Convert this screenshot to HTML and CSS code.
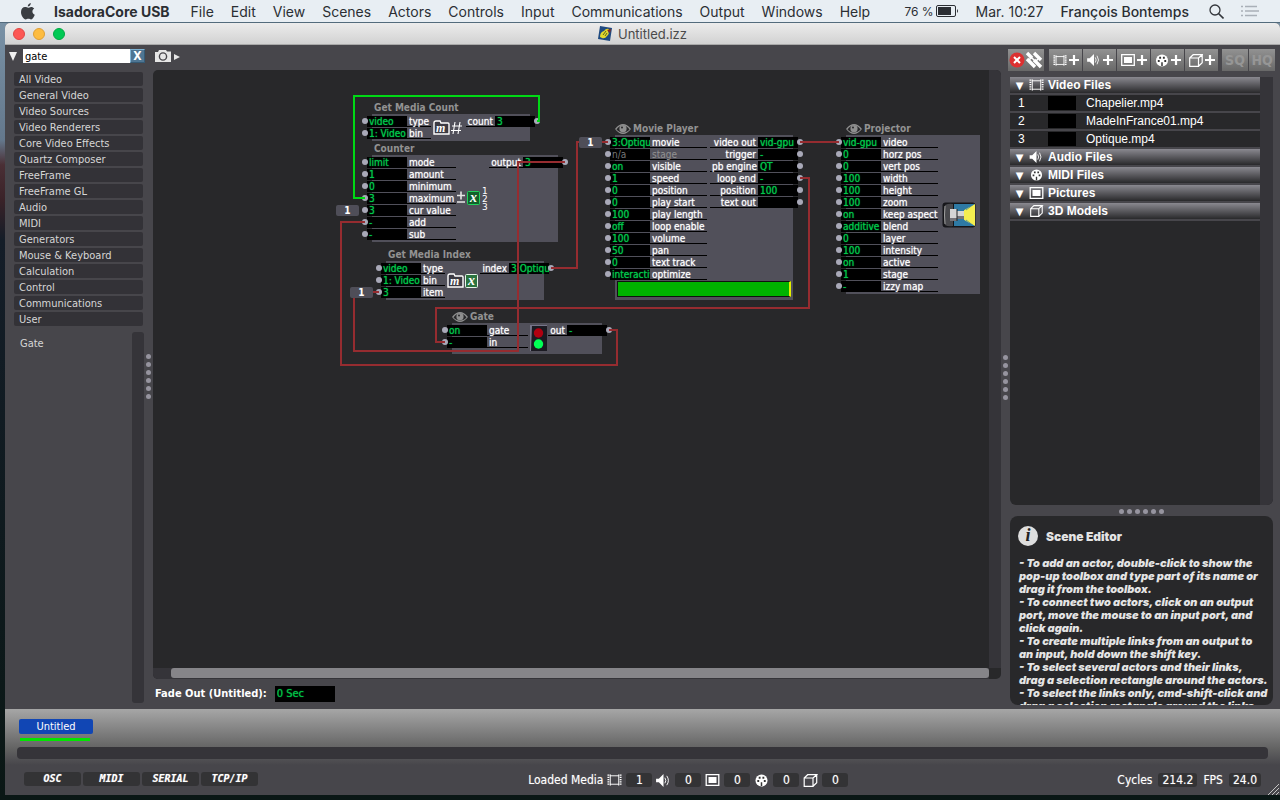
FILE: index.html
```html
<!DOCTYPE html>
<html lang="en">
<head>
<meta charset="utf-8">
<title>Untitled.izz</title>
<link rel="stylesheet" href="styles.css">
</head>
<body>
<svg class="defs" aria-hidden="true">
  <symbol id="film" viewBox="0 0 16 12"><path d="M1.500 0v12M14.500 0v12" stroke="#fff" stroke-width="2" stroke-dasharray="1.400 1"/><path d="M3.500 0v12M12.500 0v12M3 1.500h10M3 10.500h10" stroke="#fff" stroke-width="1" fill="none"/></symbol>
  <symbol id="sound" viewBox="0 0 16 14"><path d="M0 5h3l5-5v14L3 9H0z" fill="#fff"/><path d="M9.500 4q2 3 0 6M11.500 2q3.500 5 0 10" stroke="#fff" fill="none"/></symbol>
  <symbol id="picture" viewBox="0 0 14 12"><path d="M.7.7h12.600v10.600H.7z" stroke="#fff" stroke-width="1.300" fill="none"/><path d="M3 3h8v6H3z" fill="#fff"/></symbol>
  <symbol id="midi" viewBox="0 0 14 14"><circle cx="7" cy="7" r="6.500" fill="#fff"/><path d="M2.500 6.500h2v2h-2zM9.500 6.500h2v2h-2zM4 3h2v2H4zM8 3h2v2H8zM6.200 9h1.600v4H6.200z" fill="#333"/></symbol>
  <symbol id="cube" viewBox="0 0 14 13"><path d="M.7 4h8.800v8.300H.7zM.7 4l3.500-3.300h9L9.500 4M13.200.7v8l-3.700 3.600" stroke="#fff" stroke-width="1.200" fill="none"/></symbol>
  <symbol id="eye" viewBox="0 0 16 10"><path d="M0 5Q4 0 8 0t8 5q-4 5-8 5T0 5z" fill="#8f8f8f"/><path d="M1.500 5.500Q4 1.500 8 1.500t6.500 4Q12 8.500 8 8.500t-6.500-3z" fill="#28282a"/><circle cx="8" cy="4.700" r="3.600" fill="#8f8f8f"/><circle cx="7" cy="3.500" r="1" fill="#28282a"/></symbol>
  <symbol id="plus" viewBox="0 0 10 10"><path d="M5 0v10M0 5h10" stroke="#fff" stroke-width="2.200"/></symbol>
</svg>

<nav class="menubar">
  <svg class="apple" viewBox="0 0 14 17"><path d="M9.800 0c.1 1.800-1.300 3.500-3 3.500C6.600 1.800 8.200.2 9.800 0zM7.200 4.700c.8 0 1.500-.8 3-.8 1.100 0 2.300.6 3 1.700-2.700 1.600-2.200 5.200.6 6.200-.7 2-2.200 4.600-3.700 4.600-1 0-1.400-.7-2.700-.7s-1.700.7-2.700.7C2.700 16.400 0 12.700 0 9c0-3.200 2-5 4-5 1.400 0 2.400.7 3.200.7z" fill="#3a3d42"/></svg>
  <button class="menu app">IsadoraCore USB</button>
  <button class="menu">File</button><button class="menu">Edit</button><button class="menu">View</button><button class="menu">Scenes</button><button class="menu">Actors</button><button class="menu">Controls</button><button class="menu">Input</button><button class="menu">Communications</button><button class="menu">Output</button><button class="menu">Windows</button><button class="menu">Help</button>
  <span class="battery">76 % <svg width="23" height="12" viewBox="0 0 23 12"><rect x=".5" y=".5" width="19" height="11" rx="1.500" fill="none" stroke="#2b2e33"/><path d="M2 2h13v8H2z" fill="#2b2e33"/><path d="M21 4q2 2 0 4z" fill="#2b2e33"/></svg></span>
  <span class="clock">Mar. 10:27</span>
  <button class="menu user">François Bontemps</button>
  <button class="menu find" aria-label="Search"><svg width="15" height="15" viewBox="0 0 15 15"><circle cx="6" cy="6" r="5" fill="none" stroke="#33363b" stroke-width="1.300"/><path d="M9.500 9.500l5 5" stroke="#33363b" stroke-width="1.600"/></svg></button>
  <button class="menu" aria-label="Notifications"><svg width="18" height="12" viewBox="0 0 18 12"><path d="M0 1.500h2M0 6h2M0 10.500h2M4 1.500h12M4 6h14M4 10.500h12" stroke="#a9b0b8" stroke-width="1.500"/></svg></button>
</nav>

<main class="window">
  <header class="titlebar">
    <div class="lights"><button class="light close" aria-label="Close"></button><button class="light mini" aria-label="Minimise"></button><button class="light full" aria-label="Zoom"></button></div>
    <h1 class="doc"><svg width="14" height="15" viewBox="0 0 14 15"><path d="M2 0l12 2-2 13-12-2z" fill="#1f4a80"/><path d="M2 11q0-5 4-6 2-3 5-2l-1 3q2 1-1 4-2 3-5 2z" fill="#e2d82c"/><path d="M5 9l3-4M7 10l2-3" stroke="#5c6420"/><path d="M9 4l4-1-1 4z" fill="#8c2a1c"/></svg>Untitled.izz</h1>
  </header>

  <div class="workspace">
    <aside class="toolbox">
      <div class="search"><svg width="8" height="9" viewBox="0 0 8 9"><path d="M0 0h8L4 9z" fill="#f0f0f0"/></svg><input class="query" type="text" value="gate" aria-label="Search actors"><button class="clear" aria-label="Clear search">X</button></div>
      <div class="categories">
        <button>All Video</button><button>General Video</button><button>Video Sources</button><button>Video Renderers</button><button>Core Video Effects</button><button>Quartz Composer</button><button>FreeFrame</button><button>FreeFrame GL</button><button>Audio</button><button>MIDI</button><button>Generators</button><button>Mouse &amp; Keyboard</button><button>Calculation</button><button>Control</button><button>Communications</button><button>User</button>
      </div>
      <div class="found"><button class="actor">Gate</button><div class="track"></div></div>
      <div class="grip left-grip"><i></i><i></i><i></i><i></i><i></i><i></i></div>
    </aside>

    <section class="editor">
      <div class="snapshot"><svg width="26" height="12" viewBox="0 0 26 12"><path d="M0 2h3l1-2h7l1 1.500h4V12H0z" fill="#e6e6e6"/><circle cx="8" cy="6.500" r="3.600" fill="none" stroke="#47464b" stroke-width="1.400"/><path d="M19 4l6 3-6 3z" fill="#e6e6e6"/></svg></div>
      <div class="stage">
        <div class="canvas">
          <article class="node media-count">
            <h2>Get Media Count</h2>
            <div class="body">
              <ul class="in short"><li><i></i><b>video</b><span>type</span></li><li><i></i><b>1: Video</b><span>bin</span></li></ul>
              <svg class="glyph" width="30" height="16" viewBox="0 0 30 16"><path d="M1 14V3q0-2 2-2h4l1 2h7q1 0 1 1v10z" fill="#3c3b44" stroke="#fff" stroke-width="1.400"/><text x="3" y="12" class="serif">m</text><path d="M22 2l-2 12M27 2l-2 12M19 6h10M18 10.500h10" stroke="#fff" stroke-width="1.100"/></svg>
              <ul class="out"><li><span>count</span><b>3</b><i></i></li></ul>
            </div>
          </article>
          <article class="node counter">
            <h2>Counter</h2>
            <div class="body">
              <ul class="in mid"><li><i></i><b>limit</b><span>mode</span></li><li><i></i><b>1</b><span>amount</span></li><li><i></i><b>0</b><span>minimum</span></li><li><i></i><b>3</b><span>maximum</span></li><li><i></i><b>3</b><span>cur value</span></li><li><i></i><b>-</b><span>add</span></li><li><i></i><b>-</b><span>sub</span></li></ul>
              <svg class="glyph flush" width="32" height="26" viewBox="0 0 32 26"><path d="M1 9.500h8M5 5.500v8M1 16h8" stroke="#e6e6e6" stroke-width="1.600"/><rect x="11.500" y="5.500" width="12" height="13" rx="1" fill="#12602b" stroke="#21d35b"/><text x="14" y="16" class="serif big">x</text><text x="26" y="8" class="tiny">1</text><text x="26" y="16" class="tiny">2</text><text x="26" y="24" class="tiny">3</text></svg>
              <ul class="out"><li><span>output</span><b>3</b><i></i></li></ul>
            </div>
          </article>
          <article class="node media-index">
            <h2>Get Media Index</h2>
            <div class="body">
              <ul class="in short"><li><i></i><b>video</b><span>type</span></li><li><i></i><b>1: Video</b><span>bin</span></li><li><i></i><b>3</b><span>item</span></li></ul>
              <svg class="glyph" width="32" height="16" viewBox="0 0 32 16"><path d="M1 14V3q0-2 2-2h4l1 2h7q1 0 1 1v10z" fill="#3c3b44" stroke="#fff" stroke-width="1.400"/><text x="3" y="12" class="serif">m</text><rect x="18.500" y="1.500" width="12" height="13" rx="1" fill="#2c7440" stroke="#e6f5e9"/><text x="21" y="12" class="serif big">x</text></svg>
              <ul class="out"><li><span>index</span><b>3:Optique</b><i></i></li></ul>
            </div>
          </article>
          <article class="node gate">
            <h2><svg width="16" height="10"><use href="#eye"/></svg>Gate</h2>
            <div class="body">
              <ul class="in narrow"><li><i></i><b>on</b><span>gate</span></li><li><i></i><b>-</b><span>in</span></li></ul>
              <svg class="glyph" width="17" height="26" viewBox="0 0 17 26"><path d="M0 0h17v26H0z" fill="#77758a"/><path d="M2 1h15v25H1z" fill="#1b1a22"/><circle cx="8.500" cy="8" r="4.700" fill="#b00010"/><circle cx="8.500" cy="19" r="4.700" fill="#00ff55"/></svg>
              <ul class="out"><li><span>out</span><b>-</b><i></i></li></ul>
            </div>
          </article>
          <article class="node movie">
            <h2><svg width="16" height="10"><use href="#eye"/></svg>Movie Player</h2>
            <div class="body">
              <ul class="in wide"><li><i></i><b>3:Optique</b><span>movie</span></li><li class="off"><i></i><b>n/a</b><span>stage</span></li><li><i></i><b>on</b><span>visible</span></li><li><i></i><b>1</b><span>speed</span></li><li><i></i><b>0</b><span>position</span></li><li><i></i><b>0</b><span>play start</span></li><li><i></i><b>100</b><span>play length</span></li><li><i></i><b>off</b><span>loop enable</span></li><li><i></i><b>100</b><span>volume</span></li><li><i></i><b>50</b><span>pan</span></li><li><i></i><b>0</b><span>text track</span></li><li><i></i><b>interactive</b><span>optimize</span></li></ul>
              <ul class="out wide"><li><span>video out</span><b>vid-gpu</b><i></i></li><li><span>trigger</span><b>-</b><i></i></li><li><span>pb engine</span><b>QT</b><i></i></li><li><span>loop end</span><b>-</b><i></i></li><li><span>position</span><b>100</b><i></i></li><li><span>text out</span><b></b><i></i></li></ul>
              <div class="progress"></div>
            </div>
          </article>
          <article class="node projector">
            <h2><svg width="16" height="10"><use href="#eye"/></svg>Projector</h2>
            <div class="body">
              <ul class="in wide"><li><i></i><b>vid-gpu</b><span>video</span></li><li><i></i><b>0</b><span>horz pos</span></li><li><i></i><b>0</b><span>vert pos</span></li><li><i></i><b>100</b><span>width</span></li><li><i></i><b>100</b><span>height</span></li><li><i></i><b>100</b><span>zoom</span></li><li><i></i><b>on</b><span>keep aspect</span></li><li><i></i><b>additive</b><span>blend</span></li><li><i></i><b>0</b><span>layer</span></li><li><i></i><b>100</b><span>intensity</span></li><li><i></i><b>on</b><span>active</span></li><li><i></i><b>1</b><span>stage</span></li><li><i></i><b>-</b><span>izzy map</span></li></ul>
              <svg class="glyph lamp" width="35" height="26" viewBox="0 0 35 26"><rect x=".5" y=".5" width="33" height="25" rx="3" fill="#16161a"/><path d="M12 2h20v22H12z" fill="#2e7aa5"/><path d="M3 3q4-2 8-1v22q-5 1-8-1-2-10 0-20z" fill="#48484c"/><path d="M3 4q-1 9 0 18" stroke="#a0a0a0" fill="none"/><path d="M8 7h7v12H8zM15 9h7v8h-7z" fill="#d5d5d5"/><path d="M8 16h7v3H8zM15 14h7v3h-7z" fill="#74747a"/><path d="M15 7v12" stroke="#222"/><path d="M22 8L33 2v22l-11-6z" fill="#f4ee50"/><path d="M22 8l7-6M24 8l8-6M22 18l7 6M24 18l8 6" stroke="#2e7aa5" stroke-width=".7"/></svg>
            </div>
          </article>
          <svg class="wires" width="836" height="598"><g transform="translate(-153 -70)" fill="none" stroke-width="2">
            <path d="M537 121h2V96H354v102h11" stroke="#00d915"/>
            <path d="M565 162H518v189H354v-59h25M551 268h26V142h31M609 330h8v35H341V222h24M800 142h39M800 178h9v130H436v34h9" stroke="#962c30"/>
          </g></svg>
          <span class="pill p-value">1</span><span class="pill p-item">1</span><span class="pill p-movie">1</span>
        </div>
        <div class="vtrack"></div>
        <div class="htrack"><div class="thumb"></div></div>
      </div>
      <label class="fade">Fade Out (Untitled): <input type="text" value="0 Sec"></label>
    </section>

    <div class="grip right-grip"><i></i><i></i><i></i><i></i><i></i><i></i></div>

    <aside class="side">
      <div class="tools">
        <button class="tool links" aria-label="Hide links"><svg width="34" height="18" viewBox="0 0 34 18"><circle cx="8" cy="9" r="7.500" fill="#dc3030"/><path d="M5 6l6 6M11 6l-6 6" stroke="#fff" stroke-width="2"/><path d="M18 8l8 8M18 2l5 5M25 9l7 7M25 2l7 7" stroke="#fff" stroke-width="3.400"/><path d="M22 6l4 4M20 9l2-2M27 10l2-2" stroke="#fff" stroke-width="1.600"/></svg></button>
        <button class="tool" aria-label="Add video"><svg width="14" height="11"><use href="#film"/></svg><svg width="10" height="10"><use href="#plus"/></svg></button>
        <button class="tool" aria-label="Add audio"><svg width="14" height="12"><use href="#sound"/></svg><svg width="10" height="10"><use href="#plus"/></svg></button>
        <button class="tool" aria-label="Add picture"><svg width="14" height="12"><use href="#picture"/></svg><svg width="10" height="10"><use href="#plus"/></svg></button>
        <button class="tool" aria-label="Add MIDI"><svg width="14" height="13"><use href="#midi"/></svg><svg width="10" height="10"><use href="#plus"/></svg></button>
        <button class="tool" aria-label="Add 3D model"><svg width="14" height="13"><use href="#cube"/></svg><svg width="10" height="10"><use href="#plus"/></svg></button>
        <button class="tool quality first">SQ</button><button class="tool quality">HQ</button>
      </div>
      <div class="media">
        <div class="files">
          <button class="group"><em>▼</em><svg width="15" height="12"><use href="#film"/></svg>Video Files</button>
          <div class="file"><span>1</span><i></i>Chapelier.mp4</div>
          <div class="file"><span>2</span><i></i>MadeInFrance01.mp4</div>
          <div class="file"><span>3</span><i></i>Optique.mp4</div>
          <button class="group"><em>▼</em><svg width="15" height="12"><use href="#sound"/></svg>Audio Files</button>
          <button class="group"><em>▼</em><svg width="15" height="12"><use href="#midi"/></svg>MIDI Files</button>
          <button class="group"><em>▼</em><svg width="15" height="12"><use href="#picture"/></svg>Pictures</button>
          <button class="group"><em>▼</em><svg width="15" height="12"><use href="#cube"/></svg>3D Models</button>
        </div>
        <div class="vtrack"></div>
      </div>
      <div class="grip flat"><i></i><i></i><i></i><i></i><i></i><i></i></div>
      <div class="info">
        <h2><span class="badge">i</span>Scene Editor</h2>
        <p>- To add an actor, double-click to show the<br>pop-up toolbox and type part of its name or<br>drag it from the toolbox.</p>
        <p>- To connect two actors, click on an output<br>port, move the mouse to an input port, and<br>click again.</p>
        <p>- To create multiple links from an output to<br>an input, hold down the shift key.</p>
        <p>- To select several actors and their links,<br>drag a selection rectangle around the actors.</p>
        <p>- To select the links only, cmd-shift-click and<br>drag a selection rectangle around the links.</p>
      </div>
    </aside>
  </div>

  <div class="scenes">
    <button class="scene">Untitled</button>
    <div class="level"></div>
    <div class="scenetrack"></div>
  </div>
  <footer class="status">
    <div class="tags"><span>OSC</span><span>MIDI</span><span>SERIAL</span><span>TCP/IP</span></div>
    <div class="loaded">Loaded Media
      <svg width="15" height="12"><use href="#film"/></svg><output>1</output>
      <svg width="15" height="13"><use href="#sound"/></svg><output>0</output>
      <svg width="15" height="12"><use href="#picture"/></svg><output>0</output>
      <svg width="15" height="13"><use href="#midi"/></svg><output>0</output>
      <svg width="15" height="13"><use href="#cube"/></svg><output>0</output>
    </div>
    <div class="stats">Cycles <output>214.2</output> FPS <output>24.0</output></div>
    <svg class="resize" width="12" height="12" viewBox="0 0 12 12"><path d="M1 12L12 1M5 12l7-7M9 12l3-3" stroke="#c4c4c4"/></svg>
  </footer>
</main>
</body>
</html>
```
FILE: styles.css
```css
* { box-sizing: border-box; }
html, body { height: 100%; }
body {
  margin: 0;
  display: flex;
  flex-direction: column;
  background: linear-gradient(#7d96aa 0, #64788c 140px, #4a2f35 165px, #3a2228 200px, #141d28 240px, #0a1715 100%);
  font-family: "DejaVu Sans Condensed", "DejaVu Sans", sans-serif;
  font-size: 11px;
  color: #fff;
  overflow: hidden;
}
button { font: inherit; color: inherit; border: 0; padding: 0; background: none; }
ul { list-style: none; margin: 0; padding: 0; }
h1, h2, p { margin: 0; }
i, em { font-style: normal; }
.defs { position: absolute; width: 0; height: 0; }

.menubar {
  flex: none;
  height: 23px;
  display: flex;
  align-items: center;
  gap: 17px;
  padding: 0 21px;
  background: #e8eef3;
  border-bottom: 1px solid #536b7c;
  color: #2b2e33;
  font-family: Inter, sans-serif;
  font-size: 14px;
}
.menu { white-space: nowrap; display: flex; }
.menu.app { margin-right: 4px; font-weight: 700; }
.apple { width: 14px; height: 17px; margin-right: 2px; flex: none; }
.battery { margin-left: auto; font-size: 12px; display: flex; align-items: center; gap: 2px; white-space: nowrap; }
.clock { white-space: nowrap; }
.menu.user { font-weight: 500; }
.menu.find { margin-left: 3px; }

.window {
  flex: 1;
  min-height: 0;
  margin: 0 0 5px 5px;
  display: flex;
  flex-direction: column;
  background: #47464b;
  border-radius: 5px 5px 0 0;
  overflow: hidden;
}
.titlebar {
  flex: none;
  height: 22px;
  display: grid;
  grid-template-columns: 1fr auto 1fr;
  align-items: center;
  background: linear-gradient(#ececec, #d2d2d2);
  border-bottom: 1px solid #a9a9a9;
}
.lights { display: flex; gap: 8px; padding-left: 8px; }
.light { width: 12px; height: 12px; border-radius: 50%; }
.close { background: #fc5753; border: 1px solid #df4744; }
.mini { background: #fdbc40; border: 1px solid #de9f34; }
.full { background: #00c954; border: 1px solid #00a844; }
.doc {
  display: flex;
  gap: 6px;
  align-items: center;
  color: #4a4a4a;
  font: 400 13px Inter, sans-serif;
}

.workspace { flex: 1; min-height: 0; display: flex; }
.toolbox {
  flex: none;
  width: 148px;
  display: flex;
  flex-direction: column;
  padding: 4px 8px 6px 9px;
  position: relative;
}
.search { display: flex; align-items: center; height: 14px; margin: 0 0 9px -5px; }
.query {
  flex: 1;
  min-width: 0;
  height: 14px;
  margin-left: 6px;
  padding: 0 2px;
  border: 0;
  background: #fff;
  color: #000;
  font: inherit;
}
.clear { width: 15px; height: 14px; background: #4f7693; border: 1px solid; border-color: #7fb2d2 #355a74 #355a74 #7fb2d2; font-size: 12px; font-weight: 700; line-height: 12px; }
.categories { display: grid; gap: 2px; margin-right: 2px; }
.categories button {
  height: 14px;
  padding: 1px 0 0 5px;
  line-height: 13px;
  text-align: left;
  border-radius: 2px;
  background: #333237;
  color: #d6d6d6;
}
.found { flex: 1; display: flex; justify-content: space-between; align-items: flex-start; margin-top: 6px; }
.actor { padding: 5px 6px; color: #d6d6d6; }
.track { align-self: stretch; width: 12px; margin-right: 1px; border-radius: 3px; background: #353439; }
.grip { display: flex; flex-direction: column; gap: 3px; }
.grip i { width: 5px; height: 5px; border-radius: 50%; background: #96949f; }
.left-grip { position: absolute; right: 2px; top: 309px; }
.right-grip { flex: none; width: 9px; padding: 310px 2px 0; }
.grip.flat { flex: none; flex-direction: row; justify-content: center; padding: 4px 0 2px; }

.editor { flex: 1; min-width: 0; display: flex; flex-direction: column; }
.snapshot { height: 25px; padding: 5px 2px; }
.stage {
  flex: 1;
  min-height: 0;
  display: grid;
  grid-template: 1fr 11px / 1fr 12px;
  border-radius: 5px;
  overflow: hidden;
  background: #28282a;
}
.canvas { position: relative; overflow: hidden; }
.vtrack { background: #353439; }
.htrack { background: #353439; padding-left: 18px; display: flex; }
.thumb { flex: 1; height: 10px; border-radius: 3px; background: #868589; }
.fade { height: 30px; display: flex; align-items: center; gap: 8px; padding: 0 0 1px 2px; font-weight: 700; }
.fade input { width: 60px; height: 16px; padding: 0 2px; border: 0; background: #000; color: #00c045; font: inherit; font-weight: 400; text-shadow: 0 0 1px #00c045; }

.node { position: absolute; font-size: 10px; }
.node h2 {
  height: 15px;
  margin-left: 2px;
  padding-top: 2px;
  display: flex;
  align-items: center;
  gap: 2px;
  color: #929292;
  font-size: 10px;
  white-space: nowrap;
}
.node h2 svg { margin-left: -2px; }
.body { display: flex; align-items: center; padding: 2px 0 1px; background: #51505a; }
.node ul { align-self: flex-start; }
.node li { height: 12px; display: flex; }
.node li i { width: 6px; height: 6px; margin-top: 2px; border-radius: 50%; background: #a9a9b8; position: relative; }
.node li b {
  width: 40px;
  height: 11px;
  padding: 0 2px;
  overflow: hidden;
  white-space: nowrap;
  background: #000;
  color: #00c84a;
  font-weight: 400;
  line-height: 11px;
  text-shadow: 0 0 1px #00c84a;
}
.node li span {
  height: 11px;
  padding: 0 2px;
  border-bottom: 1px solid #000;
  line-height: 12px;
  white-space: nowrap;
  text-shadow: 0 0 1px #ddd;
}
.node li.off b { color: #777; text-shadow: none; }
.node li.off span { color: #929292; text-shadow: none; }
.in { margin-left: -10px; }
.in i { margin-right: -1px; }
.out { margin: 0 -10px 0 auto; }
.out i { margin-left: -1px; }
.out span { text-align: right; }
.in.short span { width: 24px; }
.in.mid span { width: 49px; }
.in.narrow span { width: 41px; }
.in.wide span { width: 57px; }
.out.wide span { width: 48px; }
.glyph { flex: none; margin-left: 2px; }
.glyph.flush { margin-left: 0; }
.glyph.lamp { margin-left: 4px; }
.serif { font: italic 700 12px "Liberation Serif", serif; fill: #fff; }
.serif.big { font-size: 14px; }
.tiny { font: 9px "DejaVu Sans", sans-serif; fill: #fff; }
.progress { flex: none; width: 174px; height: 16px; margin: 0 2px; border: 1px solid #111; border-right: 2px solid #e3f000; background: #00b300; }

.media-count { left: 219px; top: 29px; width: 158px; }
.counter { left: 219px; top: 70px; width: 186px; }
.media-index { left: 233px; top: 176px; width: 158px; }
.gate { left: 299px; top: 238px; width: 150px; }
.gate .body { padding-bottom: 3px; }
.movie { left: 462px; top: 50px; width: 178px; }
.movie .body { flex-wrap: wrap; padding-bottom: 3px; }
.projector { left: 693px; top: 50px; width: 134px; }
.wires { position: absolute; left: 0; top: 0; }
.pill {
  position: absolute;
  width: 23px;
  height: 11px;
  border-radius: 2px;
  background: #4f4e58;
  font-size: 10px;
  font-weight: 700;
  line-height: 11px;
  text-align: center;
}
.p-value { left: 183px; top: 135px; }
.p-item { left: 197px; top: 217px; }
.p-movie { left: 426px; top: 67px; }

.side { flex: none; width: 270px; display: flex; flex-direction: column; padding-right: 7px; }
.tools { display: flex; gap: 1px; height: 22px; margin: 4px -6px 6px -2px; }
.tool {
  flex: none;
  width: 33px;
  display: flex;
  align-items: center;
  justify-content: center;
  gap: 2px;
  background: linear-gradient(#929292, #686868);
}
.tool.links { width: 36px; margin-right: 4px; }
.tool.quality { width: 26px; font: 700 14px "DejaVu Sans Condensed", sans-serif; color: #969696; }
.tool.first { margin-left: 3px; }
.media { flex: 1; min-height: 0; display: grid; grid-template-columns: 1fr 13px; background: #28282a; border-radius: 0 0 6px 6px; overflow: hidden; }
.files { font: 12px "Liberation Sans", sans-serif; }
.group {
  width: 100%;
  height: 16px;
  margin-bottom: 2px;
  padding-left: 5px;
  display: flex;
  align-items: center;
  gap: 4px;
  background: linear-gradient(#8a8990, #29292b);
  box-shadow: 0 2px #47464b;
  font-weight: 700;
}
.group em { width: 9px; font: 10px "DejaVu Sans", sans-serif; margin-right: 1px; }
.file { height: 16px; margin-bottom: 2px; padding: 0 0 1px 8px; display: flex; align-items: center; box-shadow: 0 2px #47464b; }
.file span { width: 30px; }
.file i { width: 28px; height: 14px; margin-right: 10px; background: #000; }
.info {
  flex: none;
  height: 189px;
  margin-bottom: 4px;
  padding: 10px 0 0 9px;
  border-radius: 8px;
  background: #28282a;
  color: #e4e4e4;
  overflow: hidden;
  font: italic 900 11px/13px Inter, sans-serif;
  white-space: nowrap;
}
.info h2 { display: flex; align-items: center; gap: 8px; height: 20px; margin: 0 0 11px -1px; font: 900 12px Inter, sans-serif; }
.badge { width: 20px; height: 20px; border-radius: 50%; background: #dedede; color: #222; text-align: center; font: italic 700 18px/19px "Liberation Serif", serif; }

.scenes { flex: none; height: 56px; padding: 10px 12px 0; background: linear-gradient(#a6a6a6, #626262 40px, #47464b 56px); }
.scene { display: block; width: 74px; height: 15px; margin-left: 2px; border-radius: 2px; background: #1146b4; line-height: 15px; }
.level { width: 70px; height: 3px; margin: 4px 0 6px 3px; background: #00e600; }
.scenetrack { height: 12px; border-radius: 4px; background: #353439; }
.status { flex: none; height: 30px; display: grid; grid-template-columns: 11fr auto 9fr; align-items: center; padding: 0 19px; position: relative; font-size: 12px; text-shadow: 0 0 1px #999; }
.tags { display: flex; gap: 2px; margin-top: -2px; }
.tags span { width: 57px; height: 14px; border-radius: 3px; background: #333335; text-align: center; font: italic 700 10px/14px "DejaVu Sans Mono", monospace; }
.loaded { display: flex; align-items: center; gap: 4px; }
.loaded svg { flex: none; }
output { display: inline-block; min-width: 26px; height: 14px; padding: 0 4px; border-radius: 3px; background: #333335; line-height: 14px; text-align: center; }
.stats { display: flex; gap: 6px; align-items: center; justify-content: flex-end; }
.resize { position: absolute; right: 1px; bottom: 0; }
```
